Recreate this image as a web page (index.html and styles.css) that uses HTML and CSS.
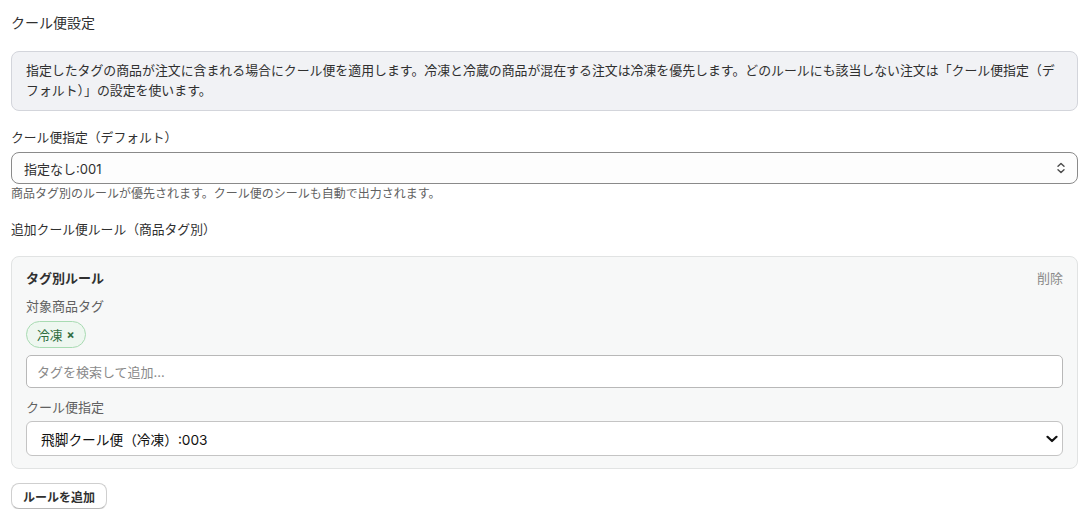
FILE: index.html
```html
<!DOCTYPE html>
<html lang="ja">
<head>
<meta charset="utf-8">
<title>クール便設定</title>
<link rel="stylesheet" href="styles.css">
</head>
<body>
<div class="page">
  <div class="title">クール便設定</div>
  <div class="info">指定したタグの商品が注文に含まれる場合にクール便を適用します。冷凍と冷蔵の商品が混在する注文は冷凍を優先します。どのルールにも該当しない注文は「クール便指定（デフォルト）」の設定を使います。</div>

  <div class="label">クール便指定（デフォルト）</div>
  <div class="select-main">
    <span>指定なし:001</span>
    <svg class="updown" width="10" height="14" viewBox="0 0 10 14"><path d="M2 5.2 L5 2.4 L8 5.2" fill="none" stroke="#4a4a4a" stroke-width="1.4" stroke-linecap="round" stroke-linejoin="round"/><path d="M2 8.8 L5 11.6 L8 8.8" fill="none" stroke="#4a4a4a" stroke-width="1.4" stroke-linecap="round" stroke-linejoin="round"/></svg>
  </div>
  <div class="help">商品タグ別のルールが優先されます。クール便のシールも自動で出力されます。</div>

  <div class="label label-rules">追加クール便ルール（商品タグ別）</div>
  <div class="card">
    <div class="card-head">
      <span class="card-title">タグ別ルール</span>
      <span class="delete">削除</span>
    </div>
    <div class="sub-label">対象商品タグ</div>
    <div class="tags"><span class="tag">冷凍 <b class="x">×</b></span></div>
    <div class="input"><span class="placeholder">タグを検索して追加...</span></div>
    <div class="sub-label sub-label-2">クール便指定</div>
    <div class="select-native">
      <span>飛脚クール便（冷凍）:003</span>
      <svg width="12" height="8" viewBox="0 0 12 8"><path d="M1.5 1.8 L6 6 L10.5 1.8" fill="none" stroke="#111" stroke-width="2.2" stroke-linecap="round" stroke-linejoin="round"/></svg>
    </div>
  </div>
  <button class="btn">ルールを追加</button>
</div>
</body>
</html>
```
FILE: styles.css
```css
* { box-sizing: border-box; }
html, body { margin: 0; padding: 0; background: #ffffff; }
body {
  font-family: Inter, "Noto Sans CJK JP", "Noto Sans", sans-serif;
  color: #303030;
  font-size: 13px;
}
.page { padding: 13px 11px 0 11px; }
.title { font-size: 14px; line-height: 20px; height: 20px; color: #303030; }
.info {
  margin-top: 18px;
  background: #f1f2f5;
  border: 1px solid #d3d5db;
  border-radius: 8px;
  padding: 9px 14px;
  font-size: 12.9px;
  line-height: 20px;
  color: #303030;
}
.label { margin-top: 18px; line-height: 18px; font-size: 12.8px; }
.select-main {
  margin-top: 5px;
  height: 32px;
  border: 1px solid #8a8a8a;
  border-radius: 8px;
  background: #fdfdfd;
  padding: 0 11px 0 12px;
  display: flex;
  align-items: center;
  justify-content: space-between;
  font-size: 13px;
  color: #303030;
}
.help { margin-top: 2px; line-height: 16px; font-size: 12px; color: #616161; }
.label-rules { margin-top: 19px; }
.card {
  margin-top: 17px;
  background: #f7f8f8;
  border: 1px solid #e1e3e3;
  border-radius: 8px;
  padding: 11px 14px 12px 14px;
}
.card-head { display: flex; justify-content: space-between; align-items: center; line-height: 20px; }
.card-title { font-weight: 700; font-size: 13px; color: #303030; }
.delete { font-size: 13px; color: #8a8a8a; }
.sub-label { margin-top: 9px; line-height: 18px; font-size: 13px; color: #616161; }
.sub-label-2 { margin-top: 10px; }
.tags { margin-top: 6px; display: flex; }
.tag {
  height: 27px;
  display: inline-flex;
  align-items: center;
  gap: 4px;
  padding: 0 10px;
  border: 1px solid #a8dbb2;
  background: #eef7f0;
  border-radius: 14px;
  color: #2e6d40;
  font-size: 12.8px;
}
.tag .x { font-size: 12px; font-weight: 700; color: #2e6d40; }
.input {
  margin-top: 7px;
  height: 33px;
  border: 1px solid #b8b8b8;
  border-radius: 5px;
  background: #ffffff;
  padding: 0 10px;
  display: flex;
  align-items: center;
}
.placeholder { color: #8a8a8a; font-size: 13px; }
.select-native {
  margin-top: 5px;
  height: 35px;
  border: 1px solid #c4c4c4;
  border-radius: 6px;
  background: #ffffff;
  padding: 0 4px 0 14px;
  display: flex;
  align-items: center;
  justify-content: space-between;
  font-size: 13.7px;
  color: #111;
}
.btn {
  margin-top: 14px;
  height: 26px;
  padding: 0 11px;
  border: 1px solid #cfcfcf;
  border-bottom-color: #b8b8b8;
  border-radius: 8px;
  background: #ffffff;
  box-shadow: 0 1px 0 rgba(0,0,0,0.06);
  font-family: Inter, "Noto Sans CJK JP", sans-serif;
  font-weight: 700;
  font-size: 12px;
  color: #303030;
  display: inline-flex;
  align-items: center;
}
```
